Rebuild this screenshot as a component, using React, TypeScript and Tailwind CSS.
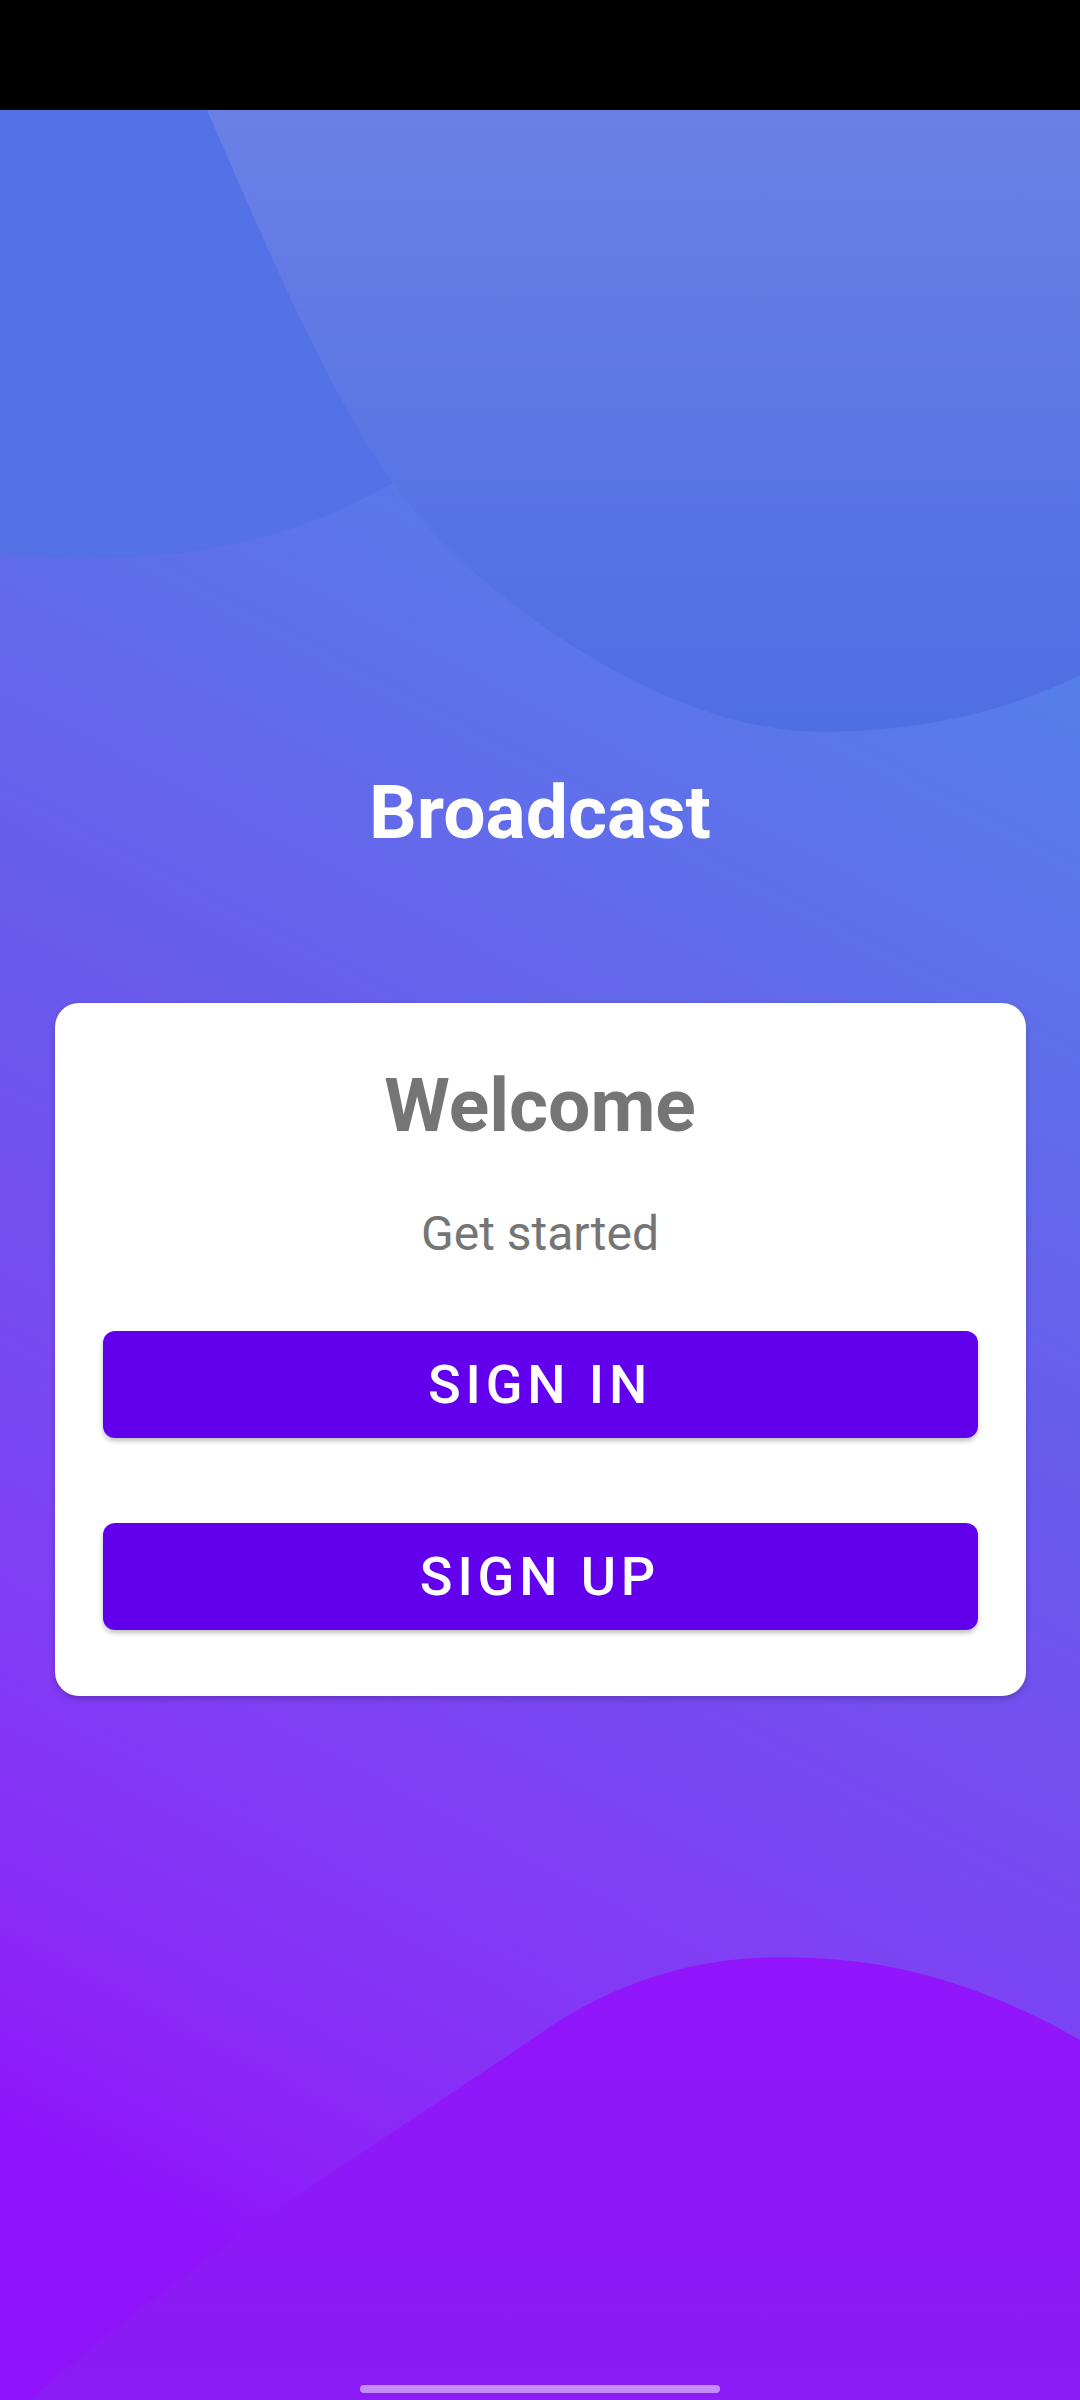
import React from "react";

// background blobs, drawn in page coordinates shifted up by the status bar
const Backdrop = () => (
    <svg className="absolute inset-0 w-full h-full" viewBox="0 110 1080 2290" preserveAspectRatio="none">
        <defs>
            <linearGradient id="bigBlob" x1="0" y1="0" x2="0" y2="1">
                <stop offset="0" stopColor="#6a80e6" />
                <stop offset="1" stopColor="#4e6ee3" />
            </linearGradient>
            <linearGradient id="hill" x1="0" y1="0" x2="0" y2="1">
                <stop offset="0" stopColor="#9215fb" />
                <stop offset="1" stopColor="#8a1cf4" />
            </linearGradient>
        </defs>
        <path d="M0,110 H420 L420,465 C340,520 250,548 150,556 C90,560 40,558 0,555 Z" fill="#5471e6" />
        <path
            d="M207,110 C290,300 360,470 460,560 C560,650 700,735 830,732 C930,730 1010,710 1080,675 V110 Z"
            fill="url(#bigBlob)"
        />
        <path
            d="M30,2400 C200,2250 400,2130 560,2020 C660,1960 740,1955 813,1958 C920,1962 1010,2000 1080,2040 V2400 Z"
            fill="url(#hill)"
        />
    </svg>
);

type ActionButtonProps = {
    label: string;
};

const ActionButton: React.FC<ActionButtonProps> = ({ label }) => (
    <button className="w-full h-[107px] rounded-[12px] bg-[#6200ee] text-white text-[54px] font-medium tracking-[0.09em] shadow-[0_3px_5px_rgba(0,0,0,0.25)]">
        {label}
    </button>
);

const App = () => {
    return (
        <div className="w-[1080px] h-[2400px] flex flex-col bg-black font-['Roboto',sans-serif]">
            <div className="h-[110px] shrink-0 bg-black" />
            <div className="relative flex-1 overflow-hidden bg-linear-28 from-[#8f14fa] from-10% via-[#6a58ed] via-50% to-[#4a8ae6] to-90%">
                <Backdrop />
                <div className="relative flex flex-col items-center pt-[658px]">
                    <h1 className="text-white text-[75px] font-bold leading-[88px]">Broadcast</h1>
                    <div className="mt-[147px] w-[971px] bg-white rounded-[24px] px-[48px] pt-[58px] pb-[66px] flex flex-col items-center shadow-[0_3px_6px_rgba(0,0,0,0.2)]">
                        <h2 className="text-[#757575] text-[75px] font-bold leading-[88px]">Welcome</h2>
                        <p className="mt-[57px] text-[#757575] text-[48px] leading-[56px]">Get started</p>
                        <div className="mt-[69px] w-full flex flex-col gap-[85px]">
                            <ActionButton label="SIGN IN" />
                            <ActionButton label="SIGN UP" />
                        </div>
                    </div>
                </div>
                <div className="absolute bottom-[7px] left-[360px] w-[360px] h-[8px] rounded-full bg-[#c38df8]" />
            </div>
        </div>
    );
};

export default App;
